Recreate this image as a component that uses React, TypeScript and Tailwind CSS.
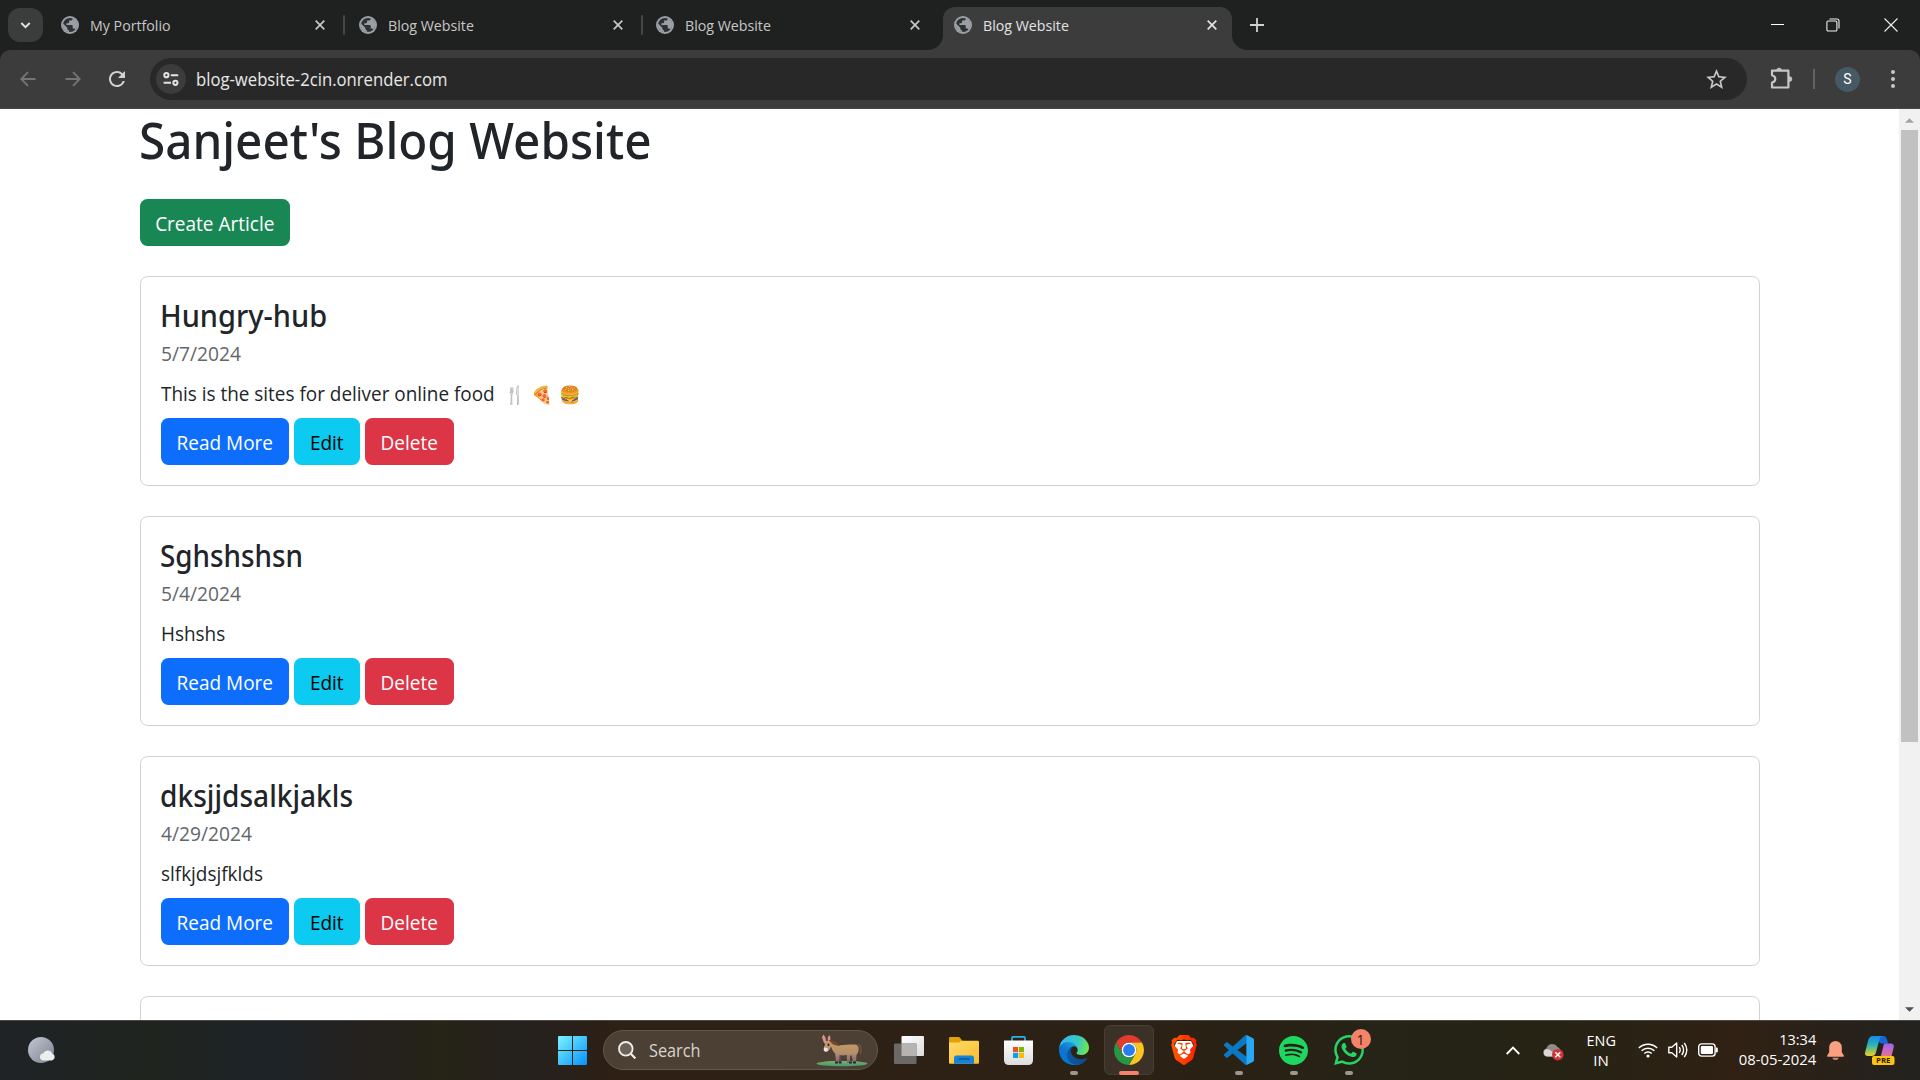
import type { ReactNode } from "react";
import { SiBrave, SiSpotify, SiWhatsapp } from "react-icons/si";
import { MdRefresh, MdStarOutline } from "react-icons/md";

const UI = "font-['Open_Sans','Noto_Sans',sans-serif]";

function Globe() {
  return (
    <svg viewBox="2 2 20 20" className="size-[18px] shrink-0">
      <circle cx="12" cy="12" r="10" fill="#9aa0a6" />
      <circle cx="12" cy="12" r="7.9" fill="#303134" />
      <path fill="#9aa0a6" d="M11 19.93c-3.95-.49-7-3.85-7-7.93 0-.62.08-1.21.21-1.79L9 15v1c0 1.1.9 2 2 2v1.93z" />
      <path fill="#9aa0a6" d="M17.9 17.39c-.26-.81-1-1.39-1.9-1.39h-1v-3c0-.55-.45-1-1-1H8v-2h2c.55 0 1-.45 1-1V7h2c1.1 0 2-.9 2-2v-.41c2.93 1.19 5 4.06 5 7.41 0 2.08-.8 3.97-2.1 5.39z" />
    </svg>
  );
}

function Cross({ active }: { active?: boolean }) {
  return (
    <svg viewBox="0 0 10 10" className="size-[10px]" stroke={active ? "#e3e3e3" : "#c7c7c7"} strokeWidth="1.7">
      <path d="M.7.7l8.6 8.6M9.3.7L.7 9.3" />
    </svg>
  );
}

function Tab({ title, active, divider }: { title: string; active?: boolean; divider?: boolean }) {
  return (
    <div
      className={
        active
          ? "relative flex h-[43px] w-[289px] items-center rounded-t-xl bg-[#3c3c3c] pb-[7px] pl-[11px] text-[#e3e3e3]"
          : "relative flex h-[43px] w-[297.7px] items-center pb-[7px] pl-[11px] text-[#c7c7c7]"
      }
    >
      <Globe />
      <span className="ml-[11px] w-[200px] origin-left scale-x-[0.947] whitespace-nowrap text-[15px] leading-5">{title}</span>
      <span className={active ? "ml-[24px]" : "ml-[25px]"}>
        <Cross active={active} />
      </span>
      {divider && <span className="ml-[18px] h-5 w-[2px] rounded bg-[#444746]" />}
      {active && (
        <>
          <svg viewBox="0 0 15 15" className="absolute bottom-0 -left-[15px] size-[15px]" fill="#3c3c3c">
            <path d="M15 0v15H0A15 15 0 0 0 15 0z" />
          </svg>
          <svg viewBox="0 0 15 15" className="absolute -right-[15px] bottom-0 size-[15px]" fill="#3c3c3c">
            <path d="M0 0v15h15A15 15 0 0 1 0 0z" />
          </svg>
        </>
      )}
    </div>
  );
}

function TabStrip() {
  return (
    <div className="flex h-[50px] items-start bg-[#1f2020]">
      <div className="mt-2 ml-2 flex h-[34px] w-[35px] items-center justify-center rounded-xl bg-[#3b3c3c]">
        <svg viewBox="0 0 12 8" className="h-[7px] w-[11px]" fill="none" stroke="#e3e3e3" strokeWidth="2.2">
          <path d="M1.2 1.2L6 6l4.8-4.8" />
        </svg>
      </div>
      <div className="mt-[7px] ml-[7px] flex">
        <Tab title="My Portfolio" divider />
        <Tab title="Blog Website" divider />
        <Tab title="Blog Website" />
        <Tab title="Blog Website" active />
      </div>
      <svg viewBox="0 0 14 14" className="mt-[18px] ml-[18px] size-[14px]" stroke="#d0d0d0" strokeWidth="1.8">
        <path d="M7 0v14M0 7h14" />
      </svg>
      <div className="ml-auto flex h-[49px] items-center">
        <span className="mr-[42px] h-px w-[13px] bg-white" />
        <svg viewBox="0 0 14 14" className="mr-[44px] size-[14px]" fill="none" stroke="#f0f0f0" strokeWidth="1.1">
          <rect x=".9" y="3" width="10" height="10" rx="1.3" />
          <path d="M3.4 1H11a2 2 0 0 1 2 2v7.6" />
        </svg>
        <svg viewBox="0 0 14 14" className="mr-[22px] size-[14px]" stroke="#f0f0f0" strokeWidth="1.1">
          <path d="M.5.5l13 13M13.5.5l-13 13" />
        </svg>
      </div>
    </div>
  );
}

function Arrow({ flip }: { flip?: boolean }) {
  return (
    <svg viewBox="0 0 16 16" className={flip ? "size-4 rotate-180" : "size-4"} fill="none" stroke="#757575" strokeWidth="1.8">
      <path d="M15.5 8H1.5M8 1.2L1.3 8 8 14.8" />
    </svg>
  );
}

function Toolbar() {
  return (
    <div className="bg-[#1f2020]">
      <div className="flex h-[59px] items-center rounded-t-[10px] border-b border-[#4a4647] bg-[#3c3c3c]">
        <div className="ml-5 flex w-[130px] items-center">
          <Arrow />
          <span className="ml-[29px]">
            <Arrow flip />
          </span>
          <MdRefresh className="ml-[24px] size-[24px] shrink-0 text-[#d2d2d2]" />
        </div>
        <div className="flex h-[42px] w-[1597px] items-center rounded-full bg-[#282828] pr-[18px] pl-[6px]">
          <span className="flex size-[30px] items-center justify-center rounded-full bg-[#3c3c3c]">
            <svg viewBox="0 0 16 14" className="h-[14px] w-4" fill="none" stroke="#e3e3e3" strokeWidth="2">
              <circle cx="3.4" cy="3.2" r="2.1" />
              <path d="M7.8 3.2h7.4M.6 10.8H8" />
              <circle cx="12.4" cy="10.8" r="2.1" />
            </svg>
          </span>
          <span className="ml-[10px] origin-left scale-x-[0.953] whitespace-nowrap text-[17.5px] leading-6 text-[#e8e8e8]">
            blog-website-2cin.onrender.com
          </span>
          <MdStarOutline className="ml-auto size-[25px] text-[#c7c7c7]" />
        </div>
        <svg viewBox="0 0 24 24" className="mr-px ml-[22px] size-6" fill="none" stroke="#c7c7c7" strokeWidth="2.2" strokeLinejoin="round">
          <path d="M3 3.6h16.4v16.9H3v-5c4.4-1.2 4.4-6 0-7.2z" />
          <path d="M7.6 2.8a2.6 2.4 0 0 1 5 0zM20.2 9.6a2.6 2.4 0 0 1 0 5z" fill="#c7c7c7" strokeWidth=".6" />
        </svg>
        <span className="ml-[19px] h-5 w-[2px] bg-[#626364]" />
        <span className="ml-5 flex size-[25px] items-center justify-center rounded-full bg-[#455a64] font-['Roboto',sans-serif] text-[14px] text-white">
          S
        </span>
        <span className="ml-[31px] flex flex-col gap-[3px]">
          <i className="size-1 rounded-full bg-[#c7c7c7]" />
          <i className="size-1 rounded-full bg-[#c7c7c7]" />
          <i className="size-1 rounded-full bg-[#c7c7c7]" />
        </span>
      </div>
    </div>
  );
}

function Button({ children, tone }: { children: ReactNode; tone: string }) {
  return (
    <button className={"flex h-[47px] items-center justify-center rounded-[7.5px] pt-[2px] text-[20px] whitespace-nowrap " + tone}>
      <span className="scale-x-[0.95]">{children}</span>
    </button>
  );
}

type Article = { title: string; width: string; date: string; body: string; emojis?: string[] };

const articles: Article[] = [
  { title: "Hungry-hub", width: "scale-x-[0.966]", date: "5/7/2024", body: "This is the sites for deliver online food", emojis: ["🍴", "🍕", "🍔"] },
  { title: "Sghshshsn", width: "scale-x-[0.928]", date: "5/4/2024", body: "Hshshs" },
  { title: "dksjjdsalkjakls", width: "scale-x-[0.937]", date: "4/29/2024", body: "slfkjdsjfklds" },
];

function Card({ article }: { article: Article }) {
  return (
    <article className="mb-[30px] h-[210px] w-[1620px] rounded-[7.5px] border border-[#d2d2d2] px-5 pt-[21px]">
      <h4 className={"mb-[5px] -ml-px origin-left font-['Noto_Sans',sans-serif] text-[30px] leading-9 font-medium " + article.width}>{article.title}</h4>
      <div className="mb-[10px] origin-left scale-x-[0.96] text-[20px] leading-[30px] text-[#62676b]">{article.date}</div>
      <div className="mb-[9px] flex text-[20px] leading-[30px]">
        <span className="w-[340px] origin-left scale-x-[0.946] whitespace-nowrap">
          {article.body}
        </span>
        {article.emojis?.map((e) => (
          <span key={e} className="w-[27.5px] text-center text-[17.5px]">
            {e}
          </span>
        ))}
      </div>
      <div className="flex gap-[5px]">
        <Button tone="w-[128px] bg-[#0d6efd] text-white">Read More</Button>
        <Button tone="w-[66px] bg-[#0dcaf0] text-black">Edit</Button>
        <Button tone="w-[89px] bg-[#dc3545] text-white">Delete</Button>
      </div>
    </article>
  );
}

function Page() {
  return (
    <div className="flex h-[911px] overflow-hidden bg-white text-[#212529]">
      <main className="flex-1 pl-[140px]">
        <h1 className="mb-[29px] -ml-px origin-left scale-x-[0.952] pt-px font-['Noto_Sans',sans-serif] text-[50px] leading-[60px] font-medium">Sanjeet's Blog Website</h1>
        <div className="mb-[30px]">
          <Button tone="w-[150px] bg-[#198754] text-white">Create Article</Button>
        </div>
        {articles.map((a) => (
          <Card key={a.title} article={a} />
        ))}
        <article className="h-[210px] w-[1620px] rounded-[7.5px] border border-[#d2d2d2]" />
      </main>
      <div className="flex w-[21px] flex-col items-center bg-[#f1f1f1]">
        <svg viewBox="0 0 10 5" className="mt-[9px] h-[5px] w-[9px]" fill="#a3a3a3">
          <path d="M5 0l5 5H0z" />
        </svg>
        <div className="mt-[7px] h-[612px] w-[17px] bg-[#c1c1c1]" />
        <svg viewBox="0 0 10 5" className="mt-auto mb-[8px] h-[5px] w-[9px]" fill="#505050">
          <path d="M5 5L0 0h10z" />
        </svg>
      </div>
    </div>
  );
}

function AppCell({ children, mark }: { children: ReactNode; mark?: "active" | "open" }) {
  return (
    <div className="flex w-[55px] items-center justify-center">
      <div
        className={
          mark === "active"
            ? "relative flex size-[50px] items-center justify-center rounded-md border border-[#473f34] bg-[#3b3126]"
            : "relative flex size-[50px] items-center justify-center"
        }
      >
        {children}
        {mark === "active" && <span className="absolute -bottom-px h-1 w-5 rounded-full bg-[#f4836a]" />}
        {mark === "open" && <span className="absolute bottom-0 h-1 w-2 rounded-full bg-[#9c9791]" />}
      </div>
    </div>
  );
}

function WindowsLogo() {
  return (
    <svg viewBox="0 0 29 29" className="size-[29px]">
      <defs>
        <linearGradient id="win" x1="0" y1="0" x2="29" y2="29" gradientUnits="userSpaceOnUse">
          <stop offset="0" stopColor="#7df3ff" />
          <stop offset="1" stopColor="#0591fb" />
        </linearGradient>
      </defs>
      <path fill="url(#win)" d="M.8 0H14v14H0V.8zM15 0h13.2l.8.8V14H15zM0 15h14v14H.8L0 28.2zM15 15h14v13.2l-.8.8H15z" />
    </svg>
  );
}

function Donkey() {
  return (
    <svg viewBox="0 0 52 33" className="h-[33px] w-[52px]">
      <defs>
        <linearGradient id="donkey" x1="0" y1="0" x2="0" y2="1">
          <stop offset="0" stopColor="#c99a5e" />
          <stop offset=".55" stopColor="#b3906c" />
          <stop offset="1" stopColor="#806173" />
        </linearGradient>
        <linearGradient id="grass" x1="0" y1="0" x2="0" y2="1">
          <stop offset="0" stopColor="#7fae62" />
          <stop offset="1" stopColor="#3f9c77" />
        </linearGradient>
      </defs>
      <ellipse cx="26" cy="29.6" rx="25.5" ry="2.7" fill="url(#grass)" />
      <path d="M42 9.5c3.600.4 4 5 3.600 9l-.7 2.600-1.500-2.600c1-3.500.6-6.400-1.900-7.600z" fill="#6c513d" />
      <path d="M22 19h3v10h-2.600zM36 18h3l.6 11h-2.700z" fill="#5d4655" />
      <path d="M8 8c2-1.600 5.600-1.600 7.600.3L21 11c5 .8 12-.9 18-.4 3.600.4 4.300 4 3.200 7.500L40.500 21l-.6 8h-2.700l-1.500-7.500-1.500 0-.5 7.500h-2.600l-.4-8c-2.700.6-5 .6-7.200 0l-.5 8h-2.900l-1-9.500c-2.400-2.200-3.300-4.600-4.100-7-1 2-2 5.500-4.500 5.200-3-.3-3-4-2-6.500z" fill="url(#donkey)" />
      <path d="M8 9L6 3.500 7.200.6c2 1.400 2.800 4 2.800 7zM12 8l-.3-4.500L13.400 1c1.500 2.300 1.200 5 .2 7.500z" fill="#d9908e" />
      <path d="M12.500 6c5-.6 9 3 11.500 5.600-3 .6-6-.3-8-2z" fill="#70482f" />
      <path d="M8.200 13.500c1.200-.4 3.600.5 4 1.600-.4 1.800-1.300 2.700-2.500 2.600-2.200-.3-2.500-2.300-1.500-4.200z" fill="#e9e3ee" />
      <ellipse cx="12.500" cy="10.800" rx="1" ry="1.400" fill="#29254b" />
      <ellipse cx="8" cy="10.500" rx=".8" ry="1.300" fill="#29254b" />
      <path d="M19 27.500h3v2h-3zM23 27.500h2.600v2H23zM33 27.500h3v2h-3zM37 27.500h3v2h-3z" fill="#312431" />
    </svg>
  );
}

function TaskView() {
  return (
    <svg viewBox="0 0 30 28" className="h-7 w-[30px]">
      <defs>
        <linearGradient id="tv" x1="0" y1="0" x2="1" y2="1">
          <stop offset="0" stopColor="#fff" />
          <stop offset="1" stopColor="#dcdcdc" />
        </linearGradient>
      </defs>
      <rect x="7.500" y="0" width="22.500" height="20" rx="1" fill="url(#tv)" />
      <rect x="0" y="7.500" width="22.500" height="20.500" rx="1" fill="#6b6965" />
      <rect x="7.500" y="7.500" width="15" height="12.500" fill="#b5b4b3" />
    </svg>
  );
}

function Folder() {
  return (
    <svg viewBox="0 0 30 27" className="h-[27px] w-[30px]">
      <defs>
        <linearGradient id="fold" x1="0" y1="0" x2="1" y2="1">
          <stop offset="0" stopColor="#ffdc6b" />
          <stop offset="1" stopColor="#fdbb2d" />
        </linearGradient>
      </defs>
      <path d="M0 1.200Q0 0 1.200 0h8.300q.8 0 1.500.7L13.500 4H28v6H0z" fill="#e3a008" />
      <path d="M0 5.500h10l3-1.800h15.800q1.200 0 1.200 1.200v20.800q0 1-1 1H1q-1 0-1-1z" fill="url(#fold)" />
      <path d="M5 26.700V21q0-2.400 2.400-2.400h15.200Q25 18.600 25 21v5.700z" fill="#1583d6" />
      <path d="M9.500 22h11" stroke="#0b4f94" strokeWidth="1.300" />
    </svg>
  );
}

function Store() {
  return (
    <svg viewBox="0 0 29 29" className="size-[29px]">
      <defs>
        <linearGradient id="bag" x1="0" y1="0" x2="0" y2="1">
          <stop offset="0" stopColor="#fff" />
          <stop offset="1" stopColor="#dcdcdc" />
        </linearGradient>
      </defs>
      <path d="M8 5.500V2Q8 .9 9.100.9h10.800Q21 .9 21 2v3.500" fill="none" stroke="#29b2ee" strokeWidth="1.700" />
      <path d="M0 4.500h29V24q0 5-5 5H5q-5 0-5-5z" fill="url(#bag)" />
      <path d="M9 11h5.200v5.200H9z" fill="#f25022" />
      <path d="M15 11h5v5.200h-5z" fill="#7fba00" />
      <path d="M9 17h5.200v5H9z" fill="#00a4ef" />
      <path d="M15 17h5v5h-5z" fill="#ffb900" />
    </svg>
  );
}

function Edge() {
  return (
    <svg viewBox="0 0 256 256" className="size-[30px]">
      <defs>
        <linearGradient id="e1" x1="63" y1="177" x2="241" y2="177" gradientUnits="userSpaceOnUse">
          <stop offset="0" stopColor="#0c59a4" />
          <stop offset="1" stopColor="#114a8b" />
        </linearGradient>
        <linearGradient id="e2" x1="157" y1="100" x2="46" y2="221" gradientUnits="userSpaceOnUse">
          <stop offset="0" stopColor="#1b9de2" />
          <stop offset=".6" stopColor="#0f74cf" />
          <stop offset="1" stopColor="#0078d4" />
        </linearGradient>
        <linearGradient id="e3" x1="20" y1="50" x2="250" y2="120" gradientUnits="userSpaceOnUse">
          <stop offset="0" stopColor="#35b8f1" />
          <stop offset=".55" stopColor="#36c8c4" />
          <stop offset="1" stopColor="#70e84c" />
        </linearGradient>
      </defs>
      <path fill="url(#e1)" d="M235.7 195.500a93.700 93.700 0 0 1-10.600 4.700 101.900 101.900 0 0 1-35.900 6.400c-47.300 0-88.500-32.500-88.500-74.300a31.500 31.500 0 0 1 16.400-27.300c-42.800 1.800-53.800 46.400-53.800 72.500 0 74 68.100 81.400 82.800 81.400 7.900 0 19.800-2.300 27-4.600l1.300-.4a128.300 128.300 0 0 0 66.600-52.800 4 4 0 0 0-5.300-5.600z" />
      <path fill="url(#e2)" d="M105.700 241.400a79.200 79.200 0 0 1-22.700-21.300 80.700 80.700 0 0 1 29.500-120c3.200-1.500 8.500-4.100 15.600-4a32.400 32.400 0 0 1 25.700 13 31.900 31.900 0 0 1 6.300 18.700c0-.2 24.500-79.600-80-79.600-43.900 0-80 41.700-80 78.200a130.200 130.200 0 0 0 12.100 56 128 128 0 0 0 156.400 67 75.500 75.500 0 0 1-62.800-8z" />
      <path fill="url(#e3)" d="M152.300 148.900c-.9 1-3.400 2.500-3.400 5.600 0 2.600 1.700 5.200 4.800 7.300 14.300 10 41.400 8.600 41.500 8.600a59.600 59.600 0 0 0 30.300-8.300 61.400 61.400 0 0 0 30.400-52.900c.3-22.400-8-37.300-11.300-43.900C223.500 23.900 177.700 0 128 0A128 128 0 0 0 0 126.200c.5-36.500 36.800-66 80-66 3.500 0 23.500.3 42 10 16.400 8.600 24.900 19 30.900 29.200 6.200 10.700 7.300 24.100 7.300 29.500s-2.700 13.300-7.900 20z" />
    </svg>
  );
}

function Chrome() {
  return (
    <svg viewBox="0 0 48 48" className="size-[30px]">
      <circle cx="24" cy="24" r="12" fill="#fff" />
      <path fill="#e33b2e" d="M24 12h20.780a24 24 0 0 0-41.560 0l10.390 18A12 12 0 0 1 24 12z" />
      <path fill="#fcc31e" d="M34.390 30L24 48a24 24 0 0 0 20.780-36H24a12 12 0 0 1 10.390 18z" />
      <path fill="#279746" d="M13.610 30L3.220 12A24 24 0 0 0 24 48l10.390-18a12 12 0 0 1-20.780 0z" />
      <circle cx="24" cy="24" r="9.500" fill="#2a7cf0" />
    </svg>
  );
}

function Brave() {
  return (
    <span className="relative flex size-[30px] items-center justify-center">
      <svg viewBox="0 0 30 30" className="absolute size-[30px]">
        <path d="M8 6h14l3 6-3 10-7 5-7-5L5 12z" fill="#fff" />
      </svg>
      <svg width="0" height="0" className="absolute">
        <linearGradient id="brave" x1="0" y1="0" x2="1" y2="0">
          <stop offset="0" stopColor="#ff5a00" />
          <stop offset="1" stopColor="#ff2000" />
        </linearGradient>
      </svg>
      <SiBrave className="relative size-[30px]" fill="url(#brave)" />
    </span>
  );
}

function VSCode() {
  return (
    <svg viewBox="0 0 24 24" className="size-[30px]">
      <path
        fill="#0a78c2"
        d="M23.150 2.587L18.210.21a1.494 1.494 0 0 0-1.705.29l-9.460 8.630-4.120-3.128a.999.999 0 0 0-1.276.057L.327 7.261A1 1 0 0 0 .326 8.740L3.899 12 .326 15.260a1 1 0 0 0 .001 1.479L1.650 17.940a.999.999 0 0 0 1.276.057l4.120-3.128 9.460 8.630a1.492 1.492 0 0 0 1.704.29l4.942-2.377A1.500 1.500 0 0 0 24 20.060V3.939a1.500 1.500 0 0 0-.85-1.352zm-5.146 14.861L10.826 12l7.178-5.448v10.896z"
      />
      <path fill="#2aa7f3" d="M18 .15q.2 0 .4.100l4.750 2.337q.85.45.85 1.352V20.060q0 .9-.85 1.352l-4.750 2.288q-.2.100-.4.100z" />
    </svg>
  );
}

function Weather() {
  return (
    <svg viewBox="0 0 29 27" className="h-[27px] w-[29px]">
      <defs>
        <linearGradient id="moon" x1="0" y1="0" x2="1" y2="1">
          <stop offset="0" stopColor="#c3c9d3" />
          <stop offset="1" stopColor="#7a828e" />
        </linearGradient>
      </defs>
      <circle cx="13" cy="13" r="13" fill="url(#moon)" />
      <path d="M15 23.500a3.700 3.700 0 0 1 .2-7.300 5 5 0 0 1 9.200.6 3.500 3.500 0 0 1-.4 6.700z" fill="#eceef0" />
    </svg>
  );
}

function Copilot() {
  return (
    <svg viewBox="0 0 30 29" className="h-[29px] w-[30px]">
      <defs>
        <linearGradient id="c1" x1="0" y1="0" x2="0" y2="1">
          <stop offset="0" stopColor="#1a86e8" />
          <stop offset=".45" stopColor="#29b5b9" />
          <stop offset="1" stopColor="#f2d01c" />
        </linearGradient>
        <linearGradient id="c2" x1="0" y1="0" x2="0" y2="1">
          <stop offset="0" stopColor="#a163ee" />
          <stop offset="1" stopColor="#f0738c" />
        </linearGradient>
      </defs>
      <path d="M7 0h11.500q2.500 0 3.200 2.500l1.500 5H16z" fill="#1666d4" />
      <path d="M7.500 0H18q-2.600.2-3.400 3L10.800 17q-.9 3-4 3H3q-3.800 0-2.800-4L3.300 4Q4.500 0 7.500 0z" fill="url(#c1)" />
      <path d="M19 7.500h6.500q4 0 3.200 4L26 22h-13q2.500-.5 3.200-3z" fill="url(#c2)" />
      <rect x="7" y="20" width="22.500" height="9" rx="2" fill="#fdc40f" />
      <text x="18.200" y="27.300" textAnchor="middle" fontSize="7.800" fontWeight="bold" fontFamily="Open Sans" fill="#2a1c00">
        PRE
      </text>
    </svg>
  );
}

function Taskbar() {
  return (
    <div className="flex h-[60px] items-center border-t border-[#4a4845] bg-[linear-gradient(90deg,#1f2326_0px,#20241f_150px,#1e2328_270px,#24211f_360px,#262317_440px,#25211e_530px,#2e2014_620px,#2d2115_1000px,#2a2115_1250px,#252416_1370px,#262315_1560px,#302114_1740px,#25221d_1880px,#242220_1920px)] pb-px">
      <div className="w-[545px] pl-7">
        <Weather />
      </div>
      <AppCell>
        <WindowsLogo />
      </AppCell>
      <div className="mr-[3px] ml-[3px] flex h-10 w-[275px] items-center rounded-full border border-[#625849] bg-[#4b4033] pr-[9px] pl-[14px]">
        <svg viewBox="0 0 18 18" className="size-[18px]" fill="none" stroke="#f0eeec" strokeWidth="1.800">
          <circle cx="7.800" cy="7.800" r="6.800" fill="#6b6259" />
          <path d="M12.800 12.800l4.600 4.600" strokeWidth="2.200" />
        </svg>
        <span className="ml-[13px] origin-left scale-x-[0.93] text-[17.5px] leading-6 text-[#d8d4cf]">Search</span>
        <span className="ml-auto">
          <Donkey />
        </span>
      </div>
      <AppCell>
        <TaskView />
      </AppCell>
      <AppCell>
        <Folder />
      </AppCell>
      <AppCell>
        <Store />
      </AppCell>
      <AppCell mark="open">
        <Edge />
      </AppCell>
      <AppCell mark="active">
        <Chrome />
      </AppCell>
      <AppCell>
        <Brave />
      </AppCell>
      <AppCell mark="open">
        <VSCode />
      </AppCell>
      <AppCell mark="open">
        <SiSpotify className="size-[29px] text-[#1ed760]" />
      </AppCell>
      <AppCell mark="open">
        <SiWhatsapp className="size-[30px] text-[#25d366]" />
        <span className="absolute top-[4px] right-[3px] flex size-5 items-center justify-center rounded-full bg-[#f4836a] text-[14px] text-[#2a1a14]">1</span>
      </AppCell>

      <div className="ml-auto flex items-center pr-[14px] text-[15px] leading-5 text-white">
        <span className="flex w-[30px] justify-center">
          <svg viewBox="0 0 14 9" className="h-[9px] w-[14px]" fill="none" stroke="#fff" strokeWidth="1.800">
            <path d="M.7 8L7 1.500 13.300 8" />
          </svg>
        </span>
        <span className="flex w-[50px] justify-center">
          <svg viewBox="0 0 21 18" className="mt-[3px] h-[18px] w-[21px]">
            <path d="M4 13.500a4 4 0 0 1-.5-7.900A6 6 0 0 1 14.500 4a5 5 0 0 1 3 5.500l-6 4z" fill="#8f8c88" />
            <path d="M4 13.500a3.800 3.800 0 0 1 0-7.500q3 0 5 2.500l3 5z" fill="#d9d8d6" />
            <circle cx="14.800" cy="11.700" r="5.800" fill="#d13438" />
            <path d="M12.300 9.200l5 5M17.300 9.200l-5 5" stroke="#fff" strokeWidth="1.500" />
          </svg>
        </span>
        <span className="mb-px flex w-[46px] flex-col items-center">
          <span className="scale-x-[0.96]">ENG</span>
          <span>IN</span>
        </span>
        <span className="ml-[9px] flex w-[30px] justify-center">
          <svg viewBox="0 0 20 16" className="h-4 w-5" fill="none" stroke="#fff" strokeWidth="1.500">
            <path d="M.8 6a13 13 0 0 1 18.400 0M3.600 8.800a9 9 0 0 1 12.800 0M6.300 11.500a5.200 5.200 0 0 1 7.400 0" />
            <circle cx="10" cy="14" r="1.600" fill="#fff" stroke="none" />
          </svg>
        </span>
        <span className="flex w-[30px] justify-center">
          <svg viewBox="0 0 20 18" className="h-[18px] w-5" fill="none" stroke="#fff" strokeWidth="1.400">
            <path d="M.8 6.300h3L8.700 2v14l-4.900-4.300h-3z" strokeLinejoin="round" />
            <path d="M11.200 6.200q2 2.800 0 5.600M13.800 4q3.600 5 0 10M16.300 1.800q5 7.200 0 14.400" />
          </svg>
        </span>
        <span className="flex w-[30px] justify-center">
          <svg viewBox="0 0 20 14" className="h-[14px] w-5">
            <rect x=".7" y=".9" width="16.400" height="12.200" rx="2.800" fill="none" stroke="#fff" strokeWidth="1.400" />
            <rect x="2.800" y="3" width="12.200" height="8" rx="1" fill="#fff" />
            <path d="M18 4.500h.6q1.200 0 1.200 1.200v2.600q0 1.200-1.200 1.200H18z" fill="#fff" />
          </svg>
        </span>
        <span className="mb-[3px] flex w-[93px] flex-col items-end whitespace-nowrap">
          <span className="origin-right scale-x-[0.97]">13:34</span>
          <span className="origin-right scale-x-[0.99]">08-05-2024</span>
        </span>
        <span className="flex w-[38px] justify-center">
          <svg viewBox="0 0 17 19" className="h-[19px] w-[17px]" fill="#fa9f80">
            <path d="M8.500 0a6.300 6.300 0 0 1 6.300 6.300v4.900l2 3.200q.5 1.400-.8 1.400H1q-1.300 0-.8-1.400l2-3.200V6.300A6.300 6.300 0 0 1 8.500 0z" />
            <path d="M5.500 16.800h6a3 2.200 0 0 1-6 0z" fill="#d08468" />
          </svg>
        </span>
        <span className="flex w-[52px] justify-center">
          <Copilot />
        </span>
      </div>
    </div>
  );
}

export default function App() {
  return (
    <div className={"h-[1080px] w-[1920px] overflow-hidden " + UI}>
      <TabStrip />
      <Toolbar />
      <Page />
      <Taskbar />
    </div>
  );
}
